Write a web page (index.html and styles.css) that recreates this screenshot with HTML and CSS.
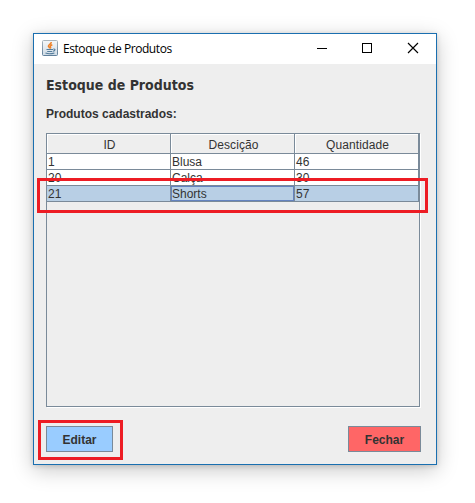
FILE: index.html
```html
<!DOCTYPE html>
<html lang="pt-BR">
<head>
<meta charset="utf-8">
<title>Estoque de Produtos</title>
<link rel="stylesheet" href="styles.css">
</head>
<body>
<main class="window">
  <header class="titlebar">
    <svg class="java" width="16" height="16" viewBox="0 0 16 16">
      <defs>
        <linearGradient id="tile" x1="0" y1="0" x2="0" y2="1">
          <stop offset="0" stop-color="#f4f7f9"/><stop offset="1" stop-color="#cfdbe5"/>
        </linearGradient>
        <linearGradient id="rim" x1="0" y1="0" x2="0" y2="1">
          <stop offset="0" stop-color="#a9b5bd"/><stop offset="1" stop-color="#5f7f9b"/>
        </linearGradient>
      </defs>
      <rect x=".5" y=".5" width="15" height="15" rx="1" fill="url(#tile)" stroke="url(#rim)"/>
      <path d="M9.300 2C9.500 4 6 4.600 6.400 6.200C6.600 7 7.600 7.400 7.700 8.500M10.300 4.800C8.400 5.500 8 6.200 8.500 7C8.900 7.600 8.600 8 8.300 8.500" fill="none" stroke="#ee8229" stroke-width="1.500"/>
      <path d="M4.500 9.500H11M5.200 11.500H10.300M11.300 9C13.800 8.700 13.300 10.800 11 11.200M3.500 13C5.500 13.800 10 13.700 12.400 12.900" fill="none" stroke="#557d9c" stroke-width="1.100"/>
    </svg>
    <span class="caption">Estoque de Produtos</span>
    <svg class="controls" width="104" height="12" viewBox="0 0 104 12" fill="none" stroke="#000" shape-rendering="crispEdges">
      <path d="M0 6.500H10M45.500 1.500H54.500V10.500H45.500Z"/>
      <path d="M91 1L101 11M101 1L91 11" shape-rendering="auto" stroke-width="1.150"/>
    </svg>
  </header>
  <section class="content">
    <h1>Estoque de Produtos</h1>
    <h2>Produtos cadastrados:</h2>
    <div class="pane">
      <div class="row head"><span>ID</span><span>Descição</span><span>Quantidade</span></div>
      <div class="row"><span>1</span><span>Blusa</span><span>46</span></div>
      <div class="row"><span>20</span><span>Calça</span><span>30</span></div>
      <div class="row selected"><span>21</span><span class="focus">Shorts</span><span>57</span><i class="mark mark-row"></i></div>
    </div>
    <footer class="actions">
      <button class="edit">Editar<i class="mark mark-edit"></i></button>
      <button class="close">Fechar</button>
    </footer>
  </section>
</main>
</body>
</html>
```
FILE: styles.css
```css
* { box-sizing: border-box; }
body {
  margin: 0;
  padding: 33px;
  height: 503px;
  overflow: hidden;
  background: #fff;
  color: #333;
  font: 12px/15px "Liberation Sans", Arial, sans-serif;
}
.window {
  width: 404px;
  height: 432px;
  border: 1px solid #1a6fb0;
  background: #eee;
  box-shadow: 0 5px 20px rgba(0, 0, 0, .22), 0 1px 5px rgba(0, 0, 0, .16);
}
.titlebar {
  display: flex;
  align-items: center;
  height: 30px;
  padding-left: 8px;
  background: #fff;
  color: #000;
}
.java { margin-top: -2px; }
.caption {
  margin-left: 5px;
  font: 12px/16px "Open Sans", sans-serif;
  letter-spacing: -.43px;
  white-space: nowrap;
}
.controls { margin: -2px 15px 0 auto; }
.content { padding: 0 15px 0 12px; }
h1 {
  margin: 0;
  padding-top: 12px;
  height: 42px;
  font: bold 14px/18px "DejaVu Sans Condensed", "DejaVu Sans", sans-serif;
  font-stretch: condensed;
  white-space: nowrap;
}
h2 { margin: 0; padding-top: 1px; height: 27px; font-size: 12px; line-height: 15px; }
.pane {
  width: 374px;
  height: 274px;
  border: 1px solid #7a8a99;
  box-shadow: 1px 1px 0 #fff;
}
.row {
  position: relative;
  display: grid;
  grid-template-columns: 124px 124px 124px;
  height: 16px;
  background: #fff;
}
.row span {
  height: 16px;
  padding-left: 1px;
  line-height: 17px;
  border: solid #7a8a99;
  border-width: 0 1px 1px 0;
}
.row.head { height: 20px; background: #eee; }
.head span {
  height: 20px;
  padding: 4px 0 0 2px;
  line-height: 15px;
  letter-spacing: .1px;
  text-align: center;
  box-shadow: inset 1px 1px 0 #fff;
}
.row.selected { background: #b8cfe5; }
.row .focus { box-shadow: inset 0 0 0 1px #6382bf; }
.mark { position: absolute; border: 3px solid #ed1c24; pointer-events: none; }
.mark-row { left: -10px; top: -8px; width: 391px; height: 35px; }
.mark-edit { left: -9px; top: -7px; width: 85px; height: 40px; }
.actions { display: flex; justify-content: space-between; margin-top: 19px; }
button {
  position: relative;
  height: 26px;
  padding: 2px 0 0;
  border: 1px solid #7a8a99;
  color: #333;
  font: bold 12px/22px "Liberation Sans", Arial, sans-serif;
}
.edit { width: 67px; background: #9cf; }
.close { width: 73px; background: #f66; }
```
